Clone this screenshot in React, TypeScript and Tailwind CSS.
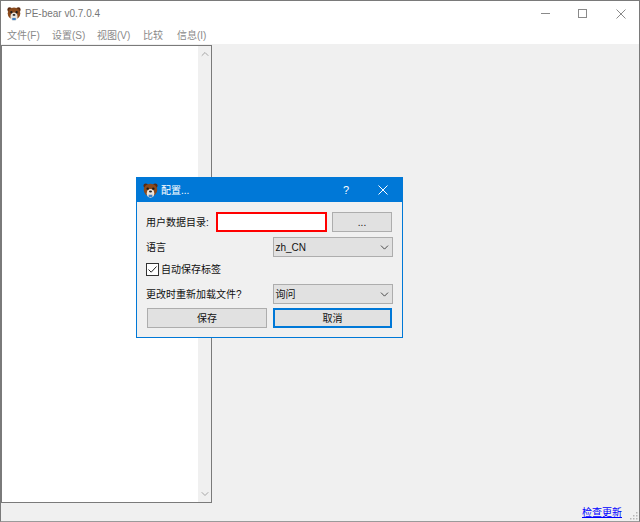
import { ChevronDown, ChevronUp } from "lucide-react";

const font = "font-['Liberation_Sans','Noto_Sans_CJK_SC',sans-serif]";

function BearIcon({ size = 14 }: { size?: number }) {
  return (
    <svg width={size} height={size} viewBox="0 0 16 16" className="shrink-0">
      <circle cx="3" cy="3" r="2.6" fill="#5a2a10" />
      <circle cx="13" cy="3" r="2.6" fill="#5a2a10" />
      <ellipse cx="8" cy="7.5" rx="7.2" ry="6.8" fill="#8a4a1c" />
      <ellipse cx="8" cy="11" rx="4" ry="4.6" fill="#e9e4dc" />
      <circle cx="5" cy="6" r="1.3" fill="#1a1a1a" />
      <circle cx="11" cy="6" r="1.3" fill="#1a1a1a" />
      <ellipse cx="8" cy="9" rx="1.6" ry="1.1" fill="#222222" />
      <path d="M6 12.5h4v2.5H6z" fill="#3d7fc4" />
    </svg>
  );
}

function Combo({ value }: { value: string }) {
  return (
    <div className="h-5 w-[120px] flex items-center justify-between pl-[1px] pr-[1px] bg-[#e1e1e1] border border-[#adadad] text-[10px] text-[#111111]">
      <span>{value}</span>
      <ChevronDown size={13} strokeWidth={1.6} className="text-[#333333]" />
    </div>
  );
}

function ConfigDialog() {
  return (
    <div className="absolute left-[135px] top-[176px] w-[267px] h-[161px] flex flex-col bg-[#f0f0f0] border border-[#0078d7]">
      <div className="h-[24px] shrink-0 flex items-center bg-[#0078d7] text-white pl-[6px]">
        <BearIcon size={15} />
        <span className="ml-[3px] text-[10px]">配置...</span>
        <span className="ml-auto text-[11px] mr-[29px]">?</span>
        <svg width="10" height="10" viewBox="0 0 10 10" className="mr-[14px]">
          <path d="M0.5 0.5L9.5 9.5M9.5 0.5L0.5 9.5" stroke="#ffffff" strokeWidth="1" fill="none" />
        </svg>
      </div>
      <div className="flex-1 flex flex-col pt-[10px] pl-[9px] pr-[9px] text-[10px] text-[#111111]">
        <div className="flex items-center h-5">
          <span className="w-[70px] whitespace-nowrap">用户数据目录:</span>
          <div className="w-[111px] h-5 bg-white border-2 border-[#ff0000]" />
          <div className="ml-[5px] w-[60px] h-5 flex items-center justify-center bg-[#e1e1e1] border border-[#adadad]">...</div>
        </div>
        <div className="flex items-center h-5 mt-[5px]">
          <span className="w-[128px]">语言</span>
          <Combo value="zh_CN" />
        </div>
        <div className="flex items-center h-[14px] mt-[5px]">
          <span className="w-[13px] h-[13px] flex items-center justify-center bg-white border border-[#333333]">
            <svg width="11" height="11" viewBox="0 0 11 11">
              <path d="M1.5 5.5L4.2 8.2L9.5 2.5" stroke="#222222" strokeWidth="1" fill="none" />
            </svg>
          </span>
          <span className="ml-[2px]">自动保存标签</span>
        </div>
        <div className="flex items-center h-5 mt-[8px]">
          <span className="w-[128px] whitespace-nowrap">更改时重新加载文件?</span>
          <Combo value="询问" />
        </div>
        <div className="flex items-center h-5 mt-[4px] pl-[1px]">
          <button className="w-[120px] h-5 bg-[#e1e1e1] border border-[#adadad]">保存</button>
          <button className="ml-[6px] w-[119px] h-5 bg-[#e1e1e1] border-2 border-[#0078d7]">取消</button>
        </div>
      </div>
    </div>
  );
}

export default function App() {
  return (
    <div className={`relative w-[640px] h-[522px] flex flex-col bg-white border border-[#7a7a7a] border-b-[#9a9a9a] overflow-hidden ${font}`}>
      <div className="h-[25px] shrink-0 flex items-center pl-[6px] bg-white">
        <BearIcon />
        <span className="ml-[4px] text-[10px] text-[#777777]">PE-bear v0.7.0.4</span>
        <div className="ml-auto flex items-center">
          <svg width="9" height="9" viewBox="0 0 9 9" className="mr-[28px]">
            <path d="M0 4.5H9" stroke="#8a8a8a" strokeWidth="1" />
          </svg>
          <svg width="9" height="9" viewBox="0 0 9 9" className="mr-[29px]">
            <rect x="0.5" y="0.5" width="8" height="8" fill="none" stroke="#8a8a8a" strokeWidth="1" />
          </svg>
          <svg width="10" height="10" viewBox="0 0 10 10" className="mr-[13px]">
            <path d="M0.5 0.5L9.5 9.5M9.5 0.5L0.5 9.5" stroke="#8a8a8a" strokeWidth="1" fill="none" />
          </svg>
        </div>
      </div>
      <div className="h-[18px] shrink-0 flex items-center pl-[6px] text-[10px] text-[#8a8a8a] bg-white">
        <span className="w-[45px]">文件(F)</span>
        <span className="w-[45px]">设置(S)</span>
        <span className="w-[46px]">视图(V)</span>
        <span className="w-[34px]">比较</span>
        <span>信息(I)</span>
      </div>
      <div className="flex-1 flex flex-col bg-[#f0f0f0] min-h-0">
        <div className="w-[211px] h-[458px] mt-[1px] flex bg-white border border-[#7a7a7a]">
          <div className="flex-1" />
          <div className="w-[13px] flex flex-col justify-between items-center bg-[#f0f0f0] py-[2px] text-[#a6a6a6]">
            <ChevronUp size={12} strokeWidth={2} />
            <ChevronDown size={12} strokeWidth={2} />
          </div>
        </div>
        <div className="flex-1 flex items-center justify-end">
          <a className="text-[10px] text-[#0000ff] underline">检查更新</a>
          <svg width="8" height="8" viewBox="0 0 8 8" className="ml-[8px] mt-[8px] mr-[1px]">
            <path d="M6 0h1.5v1.5H6zM3 3h1.5v1.5H3zM6 3h1.5v1.5H6zM0 6h1.5v1.5H0zM3 6h1.5v1.5H3zM6 6h1.5v1.5H6z" fill="#b5b5b5" />
          </svg>
        </div>
      </div>
      <ConfigDialog />
    </div>
  );
}
